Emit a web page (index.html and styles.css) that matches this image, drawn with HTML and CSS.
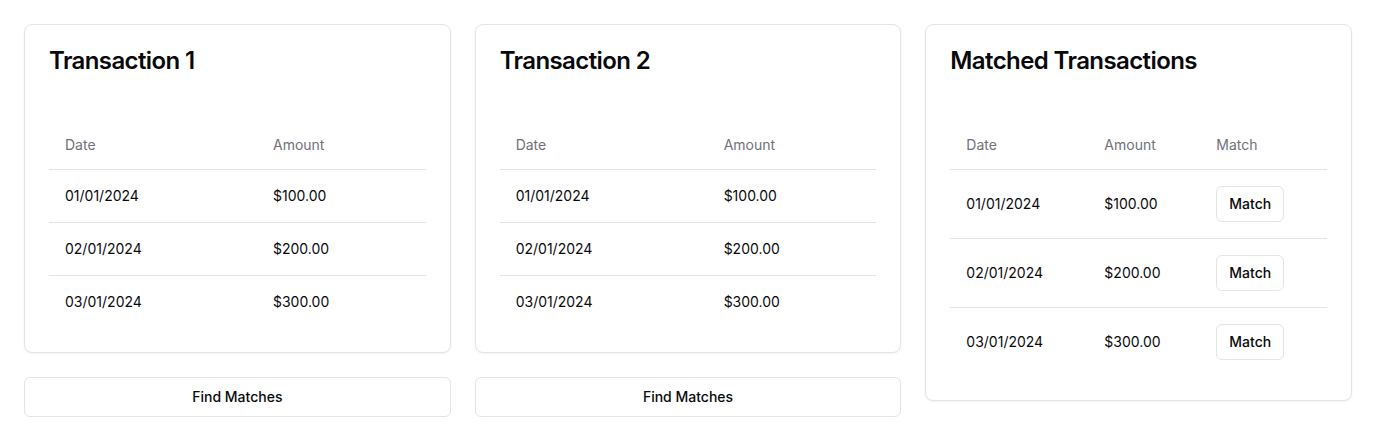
FILE: index.html
```html
<!DOCTYPE html>
<html>
<head>
<meta charset="utf-8">
<link rel="stylesheet" href="styles.css">
</head>
<body>
<div class="grid">
  <div class="col">
    <div class="card">
      <div class="card-header"><h3 class="card-title">Transaction 1</h3></div>
      <div class="card-content">
        <table class="table">
          <thead><tr><th>Date</th><th>Amount</th></tr></thead>
          <tbody>
            <tr><td>01/01/2024</td><td>$100.00</td></tr>
            <tr><td>02/01/2024</td><td>$200.00</td></tr>
            <tr><td>03/01/2024</td><td>$300.00</td></tr>
          </tbody>
        </table>
      </div>
    </div>
    <button class="btn btn-full">Find Matches</button>
  </div>
  <div class="col">
    <div class="card">
      <div class="card-header"><h3 class="card-title">Transaction 2</h3></div>
      <div class="card-content">
        <table class="table">
          <thead><tr><th>Date</th><th>Amount</th></tr></thead>
          <tbody>
            <tr><td>01/01/2024</td><td>$100.00</td></tr>
            <tr><td>02/01/2024</td><td>$200.00</td></tr>
            <tr><td>03/01/2024</td><td>$300.00</td></tr>
          </tbody>
        </table>
      </div>
    </div>
    <button class="btn btn-full">Find Matches</button>
  </div>
  <div class="col">
    <div class="card">
      <div class="card-header"><h3 class="card-title">Matched Transactions</h3></div>
      <div class="card-content">
        <table class="table">
          <thead><tr><th>Date</th><th>Amount</th><th>Match</th></tr></thead>
          <tbody>
            <tr><td>01/01/2024</td><td>$100.00</td><td><button class="btn btn-sm">Match</button></td></tr>
            <tr><td>02/01/2024</td><td>$200.00</td><td><button class="btn btn-sm">Match</button></td></tr>
            <tr><td>03/01/2024</td><td>$300.00</td><td><button class="btn btn-sm">Match</button></td></tr>
          </tbody>
        </table>
      </div>
    </div>
  </div>
</div>
</body>
</html>
```
FILE: styles.css
```css
* { box-sizing: border-box; }
html, body { margin: 0; padding: 0; background: #ffffff; }
body {
  font-family: Inter, "Liberation Sans", sans-serif;
  color: #09090b;
  padding: 24px;
}
.grid {
  display: grid;
  grid-template-columns: repeat(3, 1fr);
  gap: 24px;
  align-items: start;
}
.col {
  display: flex;
  flex-direction: column;
  gap: 24px;
}
.card {
  border: 1px solid #e4e4e7;
  border-radius: 8px;
  background: #fff;
  box-shadow: 0 1px 2px 0 rgba(0,0,0,0.05);
}
.card-header {
  padding: 24px;
}
.card-title {
  margin: 0;
  font-size: 24px;
  line-height: 24px;
  font-weight: 600;
  letter-spacing: -0.6px;
}
.card-content {
  padding: 24px;
}
.table {
  width: 100%;
  border-collapse: collapse;
  font-size: 14px;
  line-height: 20px;
}
.table th {
  height: 48px;
  padding: 0 16px;
  text-align: left;
  vertical-align: middle;
  font-weight: 400;
  color: #71717a;
  border-bottom: 1px solid #e4e4e7;
}
.table td {
  padding: 16px;
  vertical-align: middle;
}
.table tbody tr { border-bottom: 1px solid #e4e4e7; }
.table tbody tr:last-child { border-bottom: 0; }
.btn {
  font-family: inherit;
  font-size: 14px;
  line-height: 20px;
  font-weight: 500;
  color: #09090b;
  background: #fff;
  border: 1px solid #e4e4e7;
  border-radius: 6px;
  cursor: pointer;
  display: inline-flex;
  align-items: center;
  justify-content: center;
}
.btn-full {
  width: 100%;
  height: 40px;
  padding: 8px 16px;
}
.btn-sm {
  height: 36px;
  padding: 0 12px;
}
```
